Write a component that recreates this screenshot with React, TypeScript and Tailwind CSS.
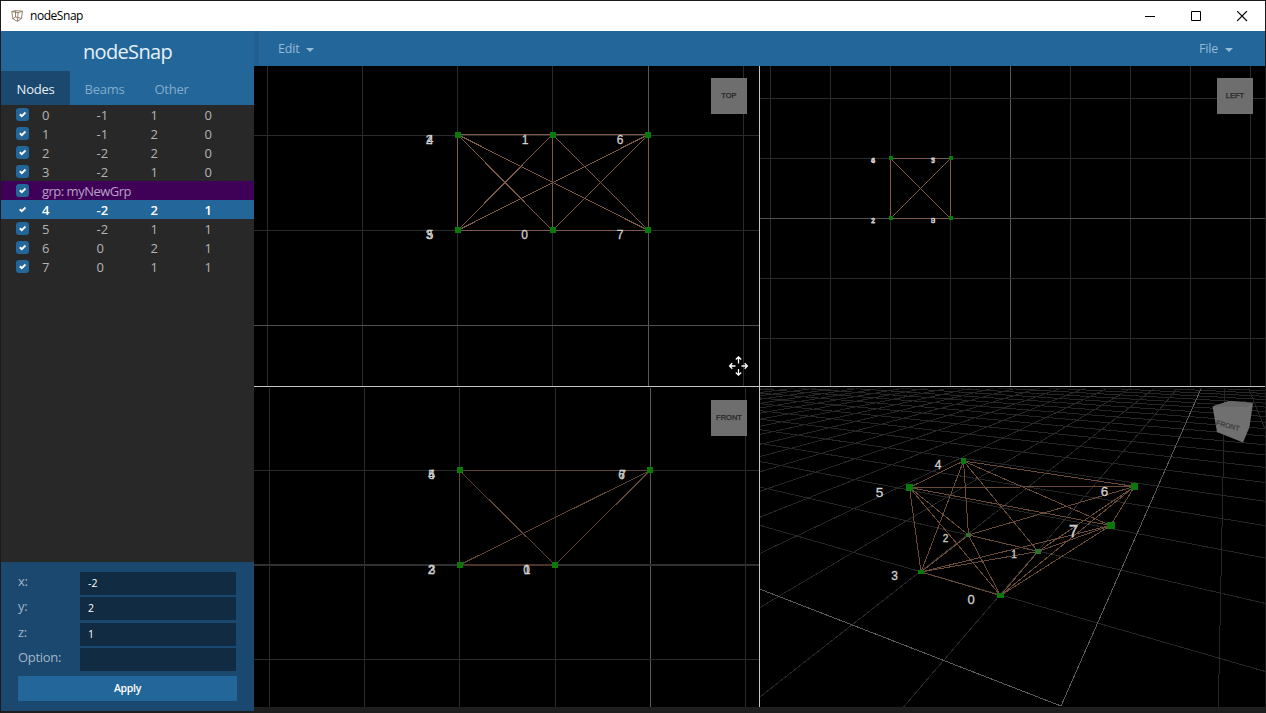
import React from "react";

type Pt = [number, number];

const NODES = [
  { id: 0, v: ["-1", "1", "0"] },
  { id: 1, v: ["-1", "2", "0"] },
  { id: 2, v: ["-2", "2", "0"] },
  { id: 3, v: ["-2", "1", "0"] },
  { group: "grp: myNewGrp" },
  { id: 4, v: ["-2", "2", "1"], selected: true },
  { id: 5, v: ["-2", "1", "1"] },
  { id: 6, v: ["0", "2", "1"] },
  { id: 7, v: ["0", "1", "1"] },
] as { id?: number; v?: string[]; group?: string; selected?: boolean }[];

const BEAMS: Pt[] = [
  [0, 1], [1, 2], [2, 3], [3, 0], [0, 2], [1, 3],
  [4, 5], [4, 6], [4, 7], [5, 6], [5, 7], [6, 7],
  [4, 3], [4, 2], [4, 1], [5, 2], [5, 3], [5, 0],
  [6, 2], [6, 1], [6, 0], [7, 3], [7, 1], [7, 0],
];

const TOP: Pt[] = [[552.5, 230.5], [552.5, 134.5], [457.5, 134.5], [457.5, 230.5], [457.5, 134.5], [457.5, 230.5], [648.5, 134.5], [648.5, 230.5]];
const LEFT: Pt[] = [[950.5, 218.5], [890.5, 218.5], [890.5, 218.5], [950.5, 218.5], [890.5, 158.5], [950.5, 158.5], [890.5, 158.5], [950.5, 158.5]];
const FRONT: Pt[] = [[555.5, 565.5], [555.5, 565.5], [459.5, 565.5], [459.5, 565.5], [459.5, 470.5], [459.5, 470.5], [650.5, 470.5], [650.5, 470.5]];
const PERSP: Pt[] = [[1000.5, 595.5], [1038, 551.5], [968.5, 535], [921, 572], [963.5, 461], [909.5, 487.5], [1134.5, 486.5], [1110.5, 525.5]];

// Ground plane projection: vanishing points of the x and y axes, and the origin.
const project = (x: number, y: number): Pt => {
  const a = -0.1414 * x;
  const b = 0.2852 * y;
  const d = 1 + a + b;
  return [(1061 + a * 113 + b * 1226) / d, (706 + a * 338 + b * 332) / d];
};

const range = (from: number, to: number) => Array.from({ length: to - from + 1 }, (_, i) => from + i);

function Beams({ pts, color }: { pts: Pt[]; color: string }) {
  return (
    <g stroke={color} strokeWidth="1" shapeRendering="crispEdges">
      {BEAMS.map(([a, b], i) => (
        <line key={i} x1={pts[a][0]} y1={pts[a][1]} x2={pts[b][0]} y2={pts[b][1]} />
      ))}
    </g>
  );
}

function Grid({ xs, ys, box, axisX, axisY }: { xs: number[]; ys: number[]; box: number[]; axisX: number; axisY: number }) {
  const [x, y, w, h] = box;
  return (
    <g shapeRendering="crispEdges">
      {xs.map((v) => (
        <rect key={v} x={v} y={y} width="1" height={h} fill={v === axisX ? "#585858" : "#2b2b2b"} />
      ))}
      {ys.map((v) => (
        <rect key={v} x={x} y={v} width={w} height="1" fill={v === axisY ? "#505050" : "#2b2b2b"} />
      ))}
    </g>
  );
}

function Markers({ pts, size }: { pts: Pt[]; size: number }) {
  return (
    <g fill="#077a07" shapeRendering="crispEdges">
      {pts.map(([x, y], i) => (
        <rect key={i} x={Math.round(x - size / 2)} y={Math.round(y - size / 2)} width={size} height={size} />
      ))}
    </g>
  );
}

function Label({ x, y, size, children }: { x: number; y: number; size: number; children: React.ReactNode }) {
  return (
    <text x={x} y={y} fontSize={size} fill="#d0d0d0" stroke="#d0d0d0" strokeWidth="0.3" textAnchor="middle" fontFamily="Liberation Sans, sans-serif">
      {children}
    </text>
  );
}

function ViewFace({ x, y, children }: { x: number; y: number; children: string }) {
  return (
    <g>
      <rect x={x} y={y} width="36" height="36" fill="#6e6e6e" />
      <text x={x + 18} y={y + 20} fontSize="7.5" fill="#262626" stroke="#262626" strokeWidth="0.25" textAnchor="middle" fontFamily="Liberation Sans, sans-serif">
        {children}
      </text>
    </g>
  );
}

function TopView() {
  return (
    <svg viewBox="254 66 505 320" className="block h-[320px] w-[505px] bg-black">
      <Grid xs={[267, 362, 457, 552, 648, 743]} ys={[135, 230, 325]} box={[254, 66, 505, 320]} axisX={648} axisY={325} />
      <Beams pts={TOP} color="#7d5a48" />
      <Markers pts={TOP.map(([x, y]) => [x > 600 ? x - 0.5 : x + 0.5, y > 200 ? y - 0.7 : y + 0.3])} size={6} />
      <Label x={429} y={144} size={12}>2</Label>
      <Label x={430} y={144} size={12}>4</Label>
      <Label x={525} y={144} size={12}>1</Label>
      <Label x={620} y={144} size={12}>6</Label>
      <Label x={429} y={239} size={12}>3</Label>
      <Label x={430} y={239} size={12}>5</Label>
      <Label x={524.5} y={239} size={12}>0</Label>
      <Label x={620} y={239} size={12}>7</Label>
      <ViewFace x={711} y={78}>TOP</ViewFace>
      <g stroke="#fff" strokeWidth="1.3" fill="none">
        <path d="M738.5 363.500V357M735.800 359.500L738.500 356.800L741.200 359.500M738.500 369V375M735.800 372.500L738.500 375.200L741.200 372.500M735.500 366H729.500M732.300 363.300L729.600 366L732.300 368.700M741.500 366H747.500M744.700 363.300L747.400 366L744.700 368.700" />
      </g>
    </svg>
  );
}

function LeftView() {
  return (
    <svg viewBox="760 66 505 320" className="block h-[320px] w-[505px] bg-black">
      <Grid
        xs={[770, 830, 890, 950, 1010, 1070, 1130, 1190, 1250]}
        ys={[98, 158, 218, 278, 338]}
        box={[760, 66, 505, 320]}
        axisX={1010}
        axisY={218}
      />
      <Beams pts={LEFT} color="#7d5a48" />
      <Markers pts={LEFT.map(([x, y]) => [x + 0.5, y - 0.3])} size={4} />
      <Label x={873} y={163} size={7.5}>4</Label>
      <Label x={873} y={163} size={7.5}>6</Label>
      <Label x={933} y={163} size={7.5}>5</Label>
      <Label x={933} y={163} size={7.5}>7</Label>
      <Label x={873} y={223} size={7.5}>2</Label>
      <Label x={873} y={223} size={7.5}>1</Label>
      <Label x={933} y={223} size={7.5}>0</Label>
      <Label x={933} y={223} size={7.5}>3</Label>
      <ViewFace x={1217} y={78}>LEFT</ViewFace>
    </svg>
  );
}

function FrontView() {
  return (
    <svg viewBox="254 387 505 320" className="block h-[320px] w-[505px] bg-black">
      <Grid xs={[269, 364, 459, 555, 650, 745]} ys={[470, 659]} box={[254, 388, 505, 319]} axisX={650} axisY={0} />
      <rect x="254" y="564" width="505" height="2" fill="#303030" shapeRendering="crispEdges" />
      <g stroke="#5f4438" strokeWidth="1" shapeRendering="crispEdges">
        <path d="M459.500 470V565M459 470.500H650M459.500 470.500L555 565M650 470.500L555 565M650 470.500L459.500 565" fill="none" />
        <path d="M460 564.500H555M460 565.500H555" stroke="#4c342b" />
      </g>
      <Markers
        pts={[
          [460, 470],
          [650, 470],
          [460, 565],
          [555, 565],
        ]}
        size={6}
      />
      <Label x={431.5} y={479} size={12}>4</Label>
      <Label x={431.5} y={479} size={12}>5</Label>
      <Label x={621.500} y={479} size={12}>6</Label>
      <Label x={622.500} y={479} size={12}>7</Label>
      <Label x={431} y={574} size={12}>2</Label>
      <Label x={432} y={574} size={12}>3</Label>
      <Label x={526.5} y={574} size={12}>0</Label>
      <Label x={527} y={574} size={12}>1</Label>
      <ViewFace x={711} y={400}>FRONT</ViewFace>
    </svg>
  );
}

function PerspectiveView() {
  const line = (a: Pt, b: Pt, key: string, axis: boolean) => (
    <line key={key} x1={a[0]} y1={a[1]} x2={b[0]} y2={b[1]} stroke={axis ? "#5c5c5c" : "#262626"} strokeWidth="1" />
  );
  return (
    <svg viewBox="760 387 505 320" className="block h-[320px] w-[505px] bg-black">
      <g shapeRendering="crispEdges">
        {range(-50, 3).filter((x) => x !== 0).map((x) => line(project(x, x > 0 ? 0 : -1), project(x, 50), "x" + x, false))}
        {line(project(1, -0.3), project(1, 0), "x1b", false)}
        {range(1, 50).map((y) => line(project(-50, y), project(y > 2 ? 5 : 3, y), "y" + y, false))}
        {line(project(-50, 0), project(0, 0), "ax", true)}
        {line(project(0, 0), project(0, 50), "ay", true)}
      </g>
      <rect x="760" y="387" width="505" height="1.5" fill="#000" />
      <Beams pts={PERSP} color="#6a4a39" />
      <g fill="#0a780a" shapeRendering="crispEdges">
        <rect x="961" y="458" width="5" height="6" />
        <rect x="906" y="484" width="7" height="7" />
        <rect x="1131" y="483" width="7" height="7" />
        <rect x="1107" y="522" width="8" height="7" />
        <rect x="966" y="533" width="5" height="4" fill="#35702a" />
        <rect x="1035" y="549" width="6" height="5" fill="#2b722a" />
        <rect x="918" y="570" width="6" height="4" />
        <rect x="997" y="593" width="7" height="5" />
      </g>
      <Label x={938} y={469} size={12}>4</Label>
      <Label x={879.5} y={496.5} size={13.5}>5</Label>
      <Label x={1104.5} y={496} size={13.5}>6</Label>
      <Label x={1073.500} y={537} size={17}>7</Label>
      <Label x={945.5} y={542} size={10}>2</Label>
      <Label x={1014} y={558} size={10}>1</Label>
      <Label x={894.5} y={580} size={12}>3</Label>
      <Label x={971} y={604} size={13}>0</Label>
      <path d="M1212.500 406.500L1229 401L1253 403L1249.500 427L1243 442.500L1217 432Z" fill="#707070" />
      <path d="M1212.500 406.500L1229 401L1253 403L1247 407Z" fill="#686868" />
      <text
        x="1228"
        y="428"
        fontSize="7"
        fill="#3a3a3a"
        stroke="#3a3a3a"
        strokeWidth="0.2"
        textAnchor="middle"
        transform="rotate(15 1228 425)"
        fontFamily="Liberation Sans, sans-serif"
      >
        FRONT
      </text>
    </svg>
  );
}

function Check() {
  return (
    <span className="flex size-[13px] items-center justify-center rounded-[3px] bg-[#23669a]">
      <svg viewBox="0 0 13 13" className="size-[13px]">
        <path d="M3.800 6.300L5.800 8.200L9.500 4.500" stroke="#fff" strokeWidth="1.900" fill="none" />
      </svg>
    </span>
  );
}

function Field({ label, value }: { label: string; value: string }) {
  return (
    <label className="flex h-[25.3px] items-start">
      <span className="w-[62px] text-[13px] leading-[19px] tracking-[-0.3px] text-[#a3b6c5]">{label}</span>
      <span className="flex h-[23px] w-[156px] items-center bg-[#102b42] px-2 pt-px text-[10.5px] font-medium text-white">{value}</span>
    </label>
  );
}

export default function App() {
  return (
    <div className="flex h-[713px] w-[1266px] flex-col overflow-hidden border border-b-0 border-[#1b1b1b] bg-[#1e1e1e] font-['Open_Sans','Noto_Sans',sans-serif]">
      <header className="flex h-[30px] shrink-0 items-center bg-white pl-[10px] text-black">
        <svg viewBox="0 0 12 12" className="size-3" fill="none" stroke="#88775f" strokeWidth="0.9">
          <path d="M.8 1.500L4.500 .6L11.400 1.200L10.500 8.500L6.500 11.400L1.800 8.800ZM.8 1.500L7 2.800L11.400 1.200M7 2.800L6.500 11.400M4.500 .6V7L1.800 8.800M4.500 7L10.500 8.500" />
        </svg>
        <span className="ml-[7px] text-[12px] tracking-[-0.45px]">nodeSnap</span>
        <div className="ml-auto flex items-center gap-[35px] pr-[17px]">
          <svg viewBox="0 0 11 11" className="size-[11px]" fill="#000"><rect x="0" y="5" width="10" height="1" /></svg>
          <svg viewBox="0 0 11 11" className="size-[11px]" stroke="#000" fill="none"><path d="M.5 .5H9.500V9.500H.5Z" /></svg>
          <svg viewBox="0 0 11 11" className="size-[11px]" stroke="#000" strokeWidth="1.100"><path d="M0 0L10 10M10 0L0 10" /></svg>
        </div>
      </header>
      <div className="flex min-h-0 flex-1">
        <aside className="flex h-[680px] w-[253px] flex-col bg-[#282828]">
          <h1 className="flex h-[40px] items-center justify-center bg-[#23669a] pt-[2px] text-[20px] font-medium tracking-[-0.65px] text-[#e6f0f8]">nodeSnap</h1>
          <nav className="flex h-[34px] shrink-0 bg-[#23669a] text-[13px] font-medium tracking-[-0.25px] text-[#85acca]">
            <span className="flex w-[69px] items-center justify-center bg-[#1a486f] pt-[4px] text-[#e8eff5]">Nodes</span>
            <span className="flex w-[69px] items-center justify-center pt-[4px]">Beams</span>
            <span className="flex w-[65px] items-center justify-center pt-[4px]">Other</span>
          </nav>
          <ul className="flex-1 text-[13px] text-[#b4b4b4]">
            {NODES.map((n, i) => (
              <li
                key={i}
                className={
                  n.group
                    ? "flex h-[19px] items-center bg-[#3f0058] pl-[15px] text-[#b8a0c4]"
                    : n.selected
                      ? "flex h-[19px] items-center bg-[#23669a] pl-[15px] font-semibold text-white"
                      : "flex h-[19px] items-center pl-[15px]"
                }
              >
                <Check />
                {n.group ? (
                  <span className="ml-[13px] pt-[2px] tracking-[-0.5px]">{n.group}</span>
                ) : (
                  <span className="ml-[13px] flex pt-[2px]">
                    <span className="w-[54.500px]">{n.id}</span>
                    {n.v!.map((v, j) => (
                      <span key={j} className="w-[54px]">{v}</span>
                    ))}
                  </span>
                )}
              </li>
            ))}
          </ul>
          <form className="flex h-[149px] flex-col bg-[#1a486f] pl-[17px] pt-[10px]">
            <Field label="x:" value="-2" />
            <Field label="y:" value="2" />
            <Field label="z:" value="1" />
            <Field label="Option:" value="" />
            <button type="button" className="mt-[3px] h-[25px] w-[219px] bg-[#23669a] pt-px text-[10.5px] font-semibold tracking-[-0.3px] text-white">Apply</button>
          </form>
        </aside>
        <main className="flex w-[1011px] flex-col">
          <div className="flex h-[35px] shrink-0 items-center justify-between border-l-[5px] border-[#215f90] bg-[#23669a] pl-[19px] pr-8 pt-[2px] text-[12.5px] font-medium tracking-[-0.2px] text-[#97bad5]">
            <span className="flex items-center gap-[7px]">
              Edit
              <svg viewBox="0 0 8 4" className="h-1 w-2"><path d="M0 0H8L4 4Z" fill="currentColor" /></svg>
            </span>
            <span className="flex items-center gap-[7px]">
              File
              <svg viewBox="0 0 8 4" className="h-1 w-2"><path d="M0 0H8L4 4Z" fill="currentColor" /></svg>
            </span>
          </div>
          <div className="grid w-[1011px] grid-cols-[505px_505px] gap-px bg-[#c4c4c4]">
            <TopView />
            <LeftView />
            <FrontView />
            <PerspectiveView />
          </div>
        </main>
      </div>
    </div>
  );
}
